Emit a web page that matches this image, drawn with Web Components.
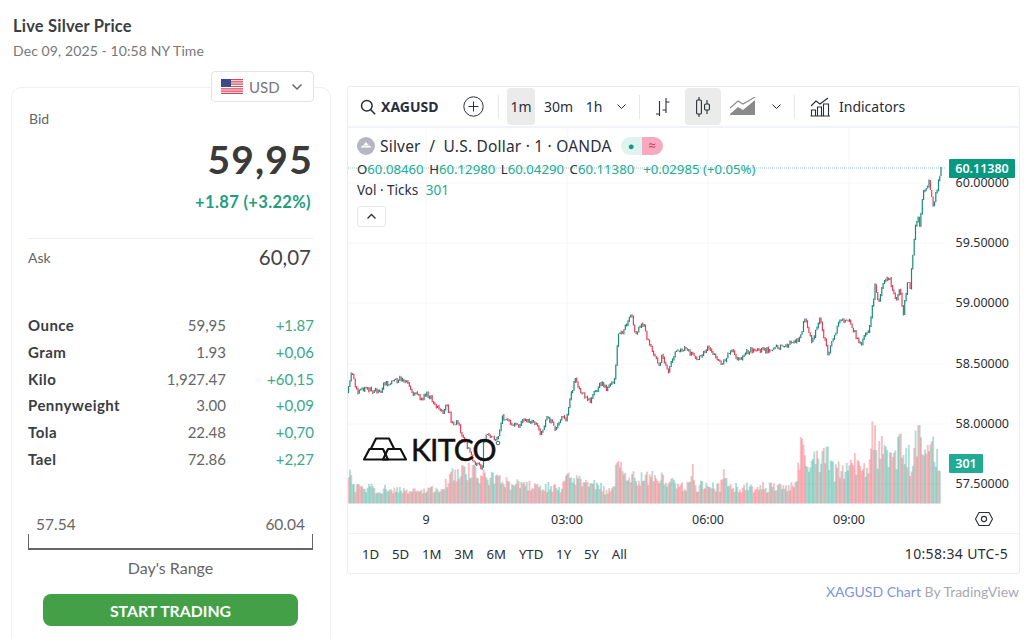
<!DOCTYPE html>
<html lang="en">
<head>
<meta charset="utf-8">
<title>Live Silver Price</title>
<style>
  html, body { margin: 0; background: #fff; }
  body { width: 1024px; height: 639px; overflow: hidden; font-family: Lato, "Open Sans", sans-serif; }
  .page { display: grid; grid-template-columns: 320px 673px; column-gap: 15px; padding: 0 0 0 11px; align-items: start; }
  .left { grid-column: 1; display: flex; flex-direction: column; }
  .right { grid-column: 2; padding-top: 86px; }
</style>
</head>
<body>
<div class="page">
  <div class="left">
    <quote-title>
      <span slot="title">Live Silver Price</span>
      <span slot="sub">Dec 09, 2025 - 10:58 NY Time</span>
    </quote-title>
    <quote-card>
      <unit-row name="Ounce" value="59,95" change="+1.87"></unit-row>
      <unit-row name="Gram" value="1.93" change="+0,06"></unit-row>
      <unit-row name="Kilo" value="1,927.47" change="+60,15"></unit-row>
      <unit-row name="Pennyweight" value="3.00" change="+0,09"></unit-row>
      <unit-row name="Tola" value="22.48" change="+0,70"></unit-row>
      <unit-row name="Tael" value="72.86" change="+2,27"></unit-row>
    </quote-card>
  </div>
  <div class="right">
    <tv-widget></tv-widget>
  </div>
</div>

<script>
class QuoteTitle extends HTMLElement {
  constructor() {
    super();
    this.attachShadow({ mode: "open" });
    this.shadowRoot.innerHTML = /* html */ `
      <style>
        :host { display: block; padding: 16px 0 0 2px; height: 71px; box-sizing: border-box; }
        .title { font-size: 16.5px; font-weight: 700; color: #3a3d42; line-height: 20px; letter-spacing: .2px; }
        .sub { font-size: 14px; color: #777; line-height: 20px; margin-top: 5px; letter-spacing: .1px; }
      </style>
      <div class="title"><slot name="title"></slot></div>
      <div class="sub"><slot name="sub"></slot></div>
    `;
  }
}

class UnitRow extends HTMLElement {
  constructor() {
    super();
    this.attachShadow({ mode: "open" });
  }

  connectedCallback() {
    this.shadowRoot.innerHTML = /* html */ `
      <style>
        :host { display: grid; grid-template-columns: 105px 93px 88px; height: 26.7px; align-items: center; font-size: 15px; }
        .name { font-weight: 700; color: #3a3d42; white-space: nowrap; letter-spacing: .45px; }
        .value { text-align: right; color: #666; }
        .change { text-align: right; color: #3aa88a; }
      </style>
      <span class="name">${this.getAttribute("name")}</span>
      <span class="value">${this.getAttribute("value")}</span>
      <span class="change">${this.getAttribute("change")}</span>
    `;
  }
}

class QuoteCard extends HTMLElement {
  constructor() {
    super();
    this.attachShadow({ mode: "open" });
    this.shadowRoot.innerHTML = /* html */ `
      <style>
        :host { display: block; position: relative; box-sizing: border-box; height: 552px; margin-top: 16px;
          border: 1px solid #f0f0f0; border-bottom: 0; border-radius: 10px 10px 0 0; padding: 21px 17px 0 16px; color: #555; }
        .currency { position: absolute; top: -17px; right: 16px; width: 103px; height: 31px; box-sizing: border-box;
          background: #fff; border: 1px solid #e4e4e4; border-radius: 4px; display: flex; align-items: center;
          padding-left: 9px; gap: 6px; font-size: 15px; color: #777; }
        .currency svg.chev { margin-left: 5px; }
        .bid { font-size: 14px; color: #666; padding-left: 1px; line-height: 20px; }
        .price { text-align: right; font-size: 39px; font-weight: 700; color: #3a3a3a; line-height: 46px; margin-top: 7px; letter-spacing: 1.2px; }
        .delta { text-align: right; font-size: 16.5px; font-weight: 700; color: #1f9d7f; line-height: 20px; margin-top: 10px; padding-right: 2px; letter-spacing: .35px; }
        hr { border: 0; border-top: 1px solid #eee; margin: 26px 0 0; }
        .ask { display: flex; justify-content: space-between; align-items: center; height: 36px; padding-right: 2px; }
        .ask span:first-child { font-size: 14px; color: #666; }
        .ask span:last-child { font-size: 20.5px; color: #444; }
        .rows { margin-top: 37px; }
        .range-values { display: flex; justify-content: space-between; margin-top: 42px; padding: 0 8px; font-size: 15.5px; line-height: 20px; color: #666; }
        .bracket { height: 14px; border: 1px solid #666; border-top: 0; border-bottom-width: 2px; }
        .range-label { text-align: center; font-size: 16px; color: #666; line-height: 20px; margin-top: 8px; }
        .btn { display: block; margin: 16px 15px 0; height: 32px; line-height: 33px; text-align: center; background: #43a047;
          border-radius: 8px; color: #fff; font-size: 15.8px; font-weight: 700; }
      </style>
      <div class="currency">
        <svg width="22" height="15" viewBox="0 0 22 15">
          <rect width="22" height="15" fill="#fff"/>
          <path d="M0 .6h22M0 2.900h22M0 5.200h22M0 7.500h22M0 9.800h22M0 12.100h22M0 14.400h22" stroke="#d8455a" stroke-width="1.200"/>
          <rect width="10" height="8" fill="#3c4a86"/>
        </svg>
        <span>USD</span>
        <svg class="chev" width="12" height="8" viewBox="0 0 12 8"><path d="M1.500 1.500 6 6l4.500-4.500" fill="none" stroke="#666" stroke-width="1.500"/></svg>
      </div>
      <div class="bid">Bid</div>
      <div class="price">59,95</div>
      <div class="delta">+1.87 (+3.22%)</div>
      <hr>
      <div class="ask"><span>Ask</span><span>60,07</span></div>
      <div class="rows"><slot></slot></div>
      <div class="range-values"><span>57.54</span><span>60.04</span></div>
      <div class="bracket"></div>
      <div class="range-label">Day's Range</div>
      <a class="btn">START TRADING</a>
    `;
  }
}

class TvToolbar extends HTMLElement {
  constructor() {
    super();
    this.attachShadow({ mode: "open" });
    this.shadowRoot.innerHTML = /* html */ `
      <style>
        :host { display: flex; align-items: center; height: 41px; box-sizing: border-box; border-bottom: 2px solid #f0f3fa;
          font-size: 14px; color: #2a2e39; padding-left: 12px; }
        svg { display: block; flex: none; }
        .sym { font-weight: 700; margin-left: 5px; width: 60px; font-size: 14px; }
        .sep { width: 1px; height: 24px; background: #e8e8ea; flex: none; }
        .btn { height: 37px; display: flex; align-items: center; justify-content: center; border-radius: 4px; flex: none; }
        .on { background: #ebebeb; }
      </style>
      <svg width="16" height="16" viewBox="0 0 16 16" fill="none" stroke="#2a2e39" stroke-width="1.500"><circle cx="6.800" cy="6.800" r="5.300"/><path d="m10.600 10.600 4.600 4.600"/></svg>
      <span class="sym">XAGUSD</span>
      <svg style="margin-left:22px" width="21" height="21" viewBox="0 0 21 21" fill="none" stroke="#2a2e39"><circle cx="10.500" cy="10.500" r="9.700"/><path d="M10.500 5.500v10M5.500 10.500h10"/></svg>
      <span class="sep" style="margin-left:14px"></span>
      <span class="btn on" style="margin-left:8px;width:28px">1m</span>
      <span class="btn" style="margin-left:9px;width:29px">30m</span>
      <span class="btn" style="margin-left:12px;width:18px">1h</span>
      <svg style="margin-left:13px" width="11" height="7" viewBox="0 0 11 7" fill="none" stroke="#2a2e39"><path d="m1.500 1.500 4 4 4-4"/></svg>
      <span class="sep" style="margin-left:12px"></span>
      <svg style="margin-left:14px" width="17" height="20" viewBox="0 0 17 20" fill="none" stroke="#2a2e39" stroke-width="1.100"><path d="M5.500 4v15M2 17h3.500M12 1v15M12 5h3.500M12 13H8.500"/></svg>
      <span class="btn on" style="margin-left:14px;width:36px">
        <svg width="18" height="22" viewBox="0 0 18 22" fill="none" stroke="#2a2e39" stroke-width="1.100"><path d="M5 1v3M5 18v3M13 4v4M13 14v4"/><rect x="2.600" y="4" width="4.800" height="14" rx="1"/><rect x="10.600" y="8" width="4.800" height="6" rx="1"/></svg>
      </span>
      <svg style="margin-left:9px" width="26" height="19" viewBox="0 0 26 19"><path d="M0 18v-1l8-7 5 3L25 3v15z" fill="#8a8a8a"/><path d="m0 11 8-7 5 3L25 0" fill="none" stroke="#8a8a8a" stroke-width="1.100"/></svg>
      <svg style="margin-left:15px" width="11" height="7" viewBox="0 0 11 7" fill="none" stroke="#2a2e39"><path d="m1.500 1.500 4 4 4-4"/></svg>
      <span class="sep" style="margin-left:12px"></span>
      <svg style="margin-left:15px" width="21" height="20" viewBox="0 0 21 20" fill="none" stroke="#2a2e39" stroke-width="1.100"><path d="M1 9l5-5 4 3 8-6"/><path d="M1.500 19v-6h4v6M7.500 19v-9h4v9M13.500 19V7h5v12M.5 19h19.500"/></svg>
      <span style="margin-left:8px">Indicators</span>
    `;
  }
}

const PATH = [[348,392],[351,373],[358,393],[365,388],[382,393],[383,385],[403,378],[413,392],[422,400],[425,393],[433,400],[442,413],[447,405],[453,427],[457,420],[463,437],[473,460],[482,470],[483,443],[487,435],[498,440],[502,417],[508,422],[520,425],[522,417],[538,427],[540,433],[548,418],[555,428],[562,417],[567,418],[572,390],[575,380],[580,392],[590,400],[602,382],[607,390],[615,378],[618,337],[628,323],[631,313],[635,335],[643,323],[648,342],[660,367],[662,355],[668,372],[677,350],[685,348],[697,358],[708,348],[722,365],[732,347],[738,360],[750,350],[770,350],[780,347],[800,340],[805,318],[812,342],[820,318],[828,355],[840,320],[850,322],[860,345],[870,327],[875,285],[879,303],[883,284],[889,277],[896,300],[900,285],[903,315],[908,277],[910,288],[915,227],[918,217],[919,232],[923,193],[929,183],[932,197],[933,207],[937,190],[941,167]];
const VOLUME = [[348,480],[350,458],[353,482],[400,486],[440,486],[450,472],[453,462],[470,462],[480,468],[500,474],[520,480],[560,482],[570,470],[580,470],[600,480],[606,488],[614,480],[618,428],[622,465],[640,472],[660,470],[680,480],[690,480],[692,453],[696,480],[720,482],[723,460],[728,482],[796,482],[802,425],[804,450],[818,450],[828,433],[835,462],[848,457],[858,447],[868,460],[872,412],[878,435],[885,433],[895,445],[903,417],[910,450],[918,420],[925,432],[932,427],[938,440],[941,445]];

function lerp(points, x) {
  for (let i = 1; i < points.length; i++) {
    if (x <= points[i][0]) {
      const [x0, y0] = points[i - 1];
      const [x1, y1] = points[i];
      return y0 + ((y1 - y0) * (x - x0)) / (x1 - x0);
    }
  }
  return points[points.length - 1][1];
}

class TvChart extends HTMLElement {
  constructor() {
    super();
    this.attachShadow({ mode: "open" });
  }

  connectedCallback() {
    this.render();
  }

  series() {
    let seed = 17;
    const rand = () => {
      seed = (seed * 16807) % 2147483647;
      return seed / 2147483647;
    };
    let bars = "";
    let vols = "";
    let prev = lerp(PATH, 348);
    for (let x = 348.5; x <= 941; x += 1.35) {
      const close = lerp(PATH, x) + (rand() - 0.5) * 5;
      const up = close < prev;
      const color = up ? "#1a8a78" : "#e0405a";
      const top = Math.min(close, prev) - rand() * 1.5;
      const bottom = Math.max(close, prev) + rand() * 1.5;
      bars += `<path d="M${x.toFixed(1)} ${top.toFixed(1)}V${bottom.toFixed(1)}" stroke="${color}" stroke-width="1.200"/>`;
      const vTop = lerp(VOLUME, x);
      const h = (503.5 - vTop) * (0.5 + rand() * 0.5);
      const solid = rand() > 0.5 ? up : !up;
      vols += `<rect x="${(x - 0.9).toFixed(1)}" y="${(503.5 - h).toFixed(1)}" width="1.900" height="${h.toFixed(1)}" fill="${solid ? "#089981" : "#f23645"}" fill-opacity=".32"/>`;
      prev = close;
    }
    // last bar runs up to the live price
    bars += `<path d="M941 167V${prev.toFixed(1)}" stroke="#1a8a78" stroke-width="1.200"/>`;
    return { bars, vols };
  }

  render() {
    const { bars, vols } = this.series();
    const grid = [183, 243, 303, 364, 424, 484].map((y) => `<path d="M348 ${y}H945" stroke="#f5f6f8"/>`).join("")
      + [426, 567, 708, 849].map((x) => `<path d="M${x} 128V503" stroke="#f5f6f8"/>`).join("");
    const prices = [[183, "60.00000"], [243, "59.50000"], [303, "59.00000"], [364, "58.50000"], [424, "58.00000"], [484, "57.50000"]]
      .map(([y, t]) => `<text x="1009" y="${y + 3.5}" text-anchor="end">${t}</text>`).join("");
    const times = [[426, "9"], [567, "03:00"], [708, "06:00"], [849, "09:00"]]
      .map(([x, t]) => `<text x="${x}" y="524" text-anchor="middle">${t}</text>`).join("");
    this.shadowRoot.innerHTML = /* html */ `
      <style>
        :host { display: block; position: relative; height: 405px; font-size: 13px; color: #2a2e39; }
        svg.plot { display: block; font-size: 12.500px; fill: #2a2e39; }
        .legend { position: absolute; left: 9px; top: 7px; }
        .title { display: flex; align-items: center; height: 22px; font-size: 15.500px; letter-spacing: .2px; white-space: nowrap; }
        .title svg { margin-right: 5px; }
        .pill { display: inline-block; width: 21px; height: 18px; text-align: center; line-height: 17px; font-size: 13px; }
        .pill.g { margin-left: 9px; background: #dff3ef; border-radius: 9px 0 0 9px; color: #089981; font-size: 11px; }
        .pill.r { background: #f7a9c2; border-radius: 0 9px 9px 0; color: #c9304f; }
        .ohlc { margin-top: 4px; height: 16px; line-height: 16px; font-size: 13.200px; white-space: nowrap; }
        .ohlc b { font-weight: 400; color: #22ab94; }
        .ohlc span { margin-right: 5.500px; }
        .vol { margin-top: 5px; line-height: 16px; font-size: 13.500px; white-space: nowrap; }
        .vol b { font-weight: 400; color: #22ab94; margin-left: 4px; }
        .collapse { margin-top: 8px; width: 29px; height: 21px; box-sizing: border-box; border: 1px solid #e8e8ea; border-radius: 3px; display: flex; align-items: center; justify-content: center; }
        .tag { position: absolute; left: 601px; background: #089981; color: #fff; height: 19px; line-height: 19px; text-align: center; font-size: 12.500px; font-weight: 600; border-radius: 1px; }
      </style>
      <svg class="plot" width="671" height="405" viewBox="348 128 671 405">
        ${grid}
        <g>${vols}</g>
        <path d="M348 168H945" stroke="#089981" stroke-opacity=".45" stroke-dasharray="1 1"/>
        <g>${bars}</g>
        <g fill="none" stroke="#111" stroke-width="2.100" stroke-linejoin="round">
          <path d="M364 459.500 369.500 449H383l5 10.500z"/>
          <path d="M383 459.500 388 449h12.500l5.500 10.500z"/>
          <path d="M371 448.500 376 438.500h13l5 10"/>
        </g>
        <text x="411" y="461" font-family="Lato, sans-serif" font-size="30" fill="#111" stroke="#111" stroke-width=".5" letter-spacing="-.8">KITCO</text>
        <circle cx="498" cy="443" r="1.800" fill="none" stroke="#333" stroke-width=".8"/>
        ${prices}
        ${times}
        <g fill="none" stroke="#2a2e39" stroke-width="1.100">
          <path d="m979 512.500h10l3.500 6.500-3.500 6.500h-10l-3.500-6.500z"/>
          <circle cx="984" cy="519" r="2.600"/>
        </g>
      </svg>
      <div class="legend">
        <div class="title">
          <svg width="18" height="18" viewBox="0 0 18 18"><circle cx="9" cy="9" r="9" fill="#b5b6c2"/><path d="M3.500 10.500h11L12.500 8.500h-7zM6.500 8l2.500-3 2.500 3z" fill="#fff"/></svg>
          <span>Silver&nbsp; / &nbsp;U.S. Dollar · 1 · OANDA</span>
          <span class="pill g">●</span><span class="pill r">≈</span>
        </div>
        <div class="ohlc"><span>O<b>60.08460</b></span><span>H<b>60.12980</b></span><span>L<b>60.04290</b></span><span>C<b>60.11380</b></span><b>&nbsp;+0.02985 (+0.05%)</b></div>
        <div class="vol">Vol · Ticks <b>301</b></div>
        <div class="collapse"><svg width="11" height="7" viewBox="0 0 11 7" fill="none" stroke="#2a2e39" stroke-width="1.300"><path d="m1.500 5.500 4-4 4 4"/></svg></div>
      </div>
      <div class="tag" style="top:31px;width:66px">60.11380</div>
      <div class="tag" style="top:326px;width:34px;background:#22ab94">301</div>
    `;
  }
}

class TvRange extends HTMLElement {
  constructor() {
    super();
    this.attachShadow({ mode: "open" });
    const items = ["1D", "5D", "1M", "3M", "6M", "YTD", "1Y", "5Y", "All"];
    this.shadowRoot.innerHTML = /* html */ `
      <style>
        :host { display: flex; align-items: center; height: 40px; box-sizing: border-box; border-top: 1px solid #f0f3fa;
          padding: 0 11px 0 14px; font-size: 13.200px; color: #2a2e39; }
        .items { display: flex; gap: 12.800px; }
        .clock { margin-left: auto; font-size: 14px; letter-spacing: .35px; }
      </style>
      <div class="items">${items.map((t) => `<span>${t}</span>`).join("")}</div>
      <div class="clock">10:58:34 UTC-5</div>
    `;
  }
}

class TvWidget extends HTMLElement {
  constructor() {
    super();
    this.attachShadow({ mode: "open" });
    this.shadowRoot.innerHTML = /* html */ `
      <style>
        :host { display: block; font-family: "Noto Sans", "Open Sans", sans-serif; }
        .frame { box-sizing: border-box; border: 1px solid #ececec; border-radius: 3px; height: 488px; width: 673px; margin-left: 1px; background: #fff; }
        .credit { text-align: right; font-family: Lato, sans-serif; font-size: 14px; color: #a6a9b0; margin-top: 9px; line-height: 18px; }
        .credit span { color: #7d94e0; }
      </style>
      <div class="frame">
        <tv-toolbar></tv-toolbar>
        <tv-chart></tv-chart>
        <tv-range></tv-range>
      </div>
      <div class="credit"><span>XAGUSD Chart</span> By TradingView</div>
    `;
  }
}

customElements.define("quote-title", QuoteTitle);
customElements.define("unit-row", UnitRow);
customElements.define("quote-card", QuoteCard);
customElements.define("tv-toolbar", TvToolbar);
customElements.define("tv-chart", TvChart);
customElements.define("tv-range", TvRange);
customElements.define("tv-widget", TvWidget);
</script>
</body>
</html>
